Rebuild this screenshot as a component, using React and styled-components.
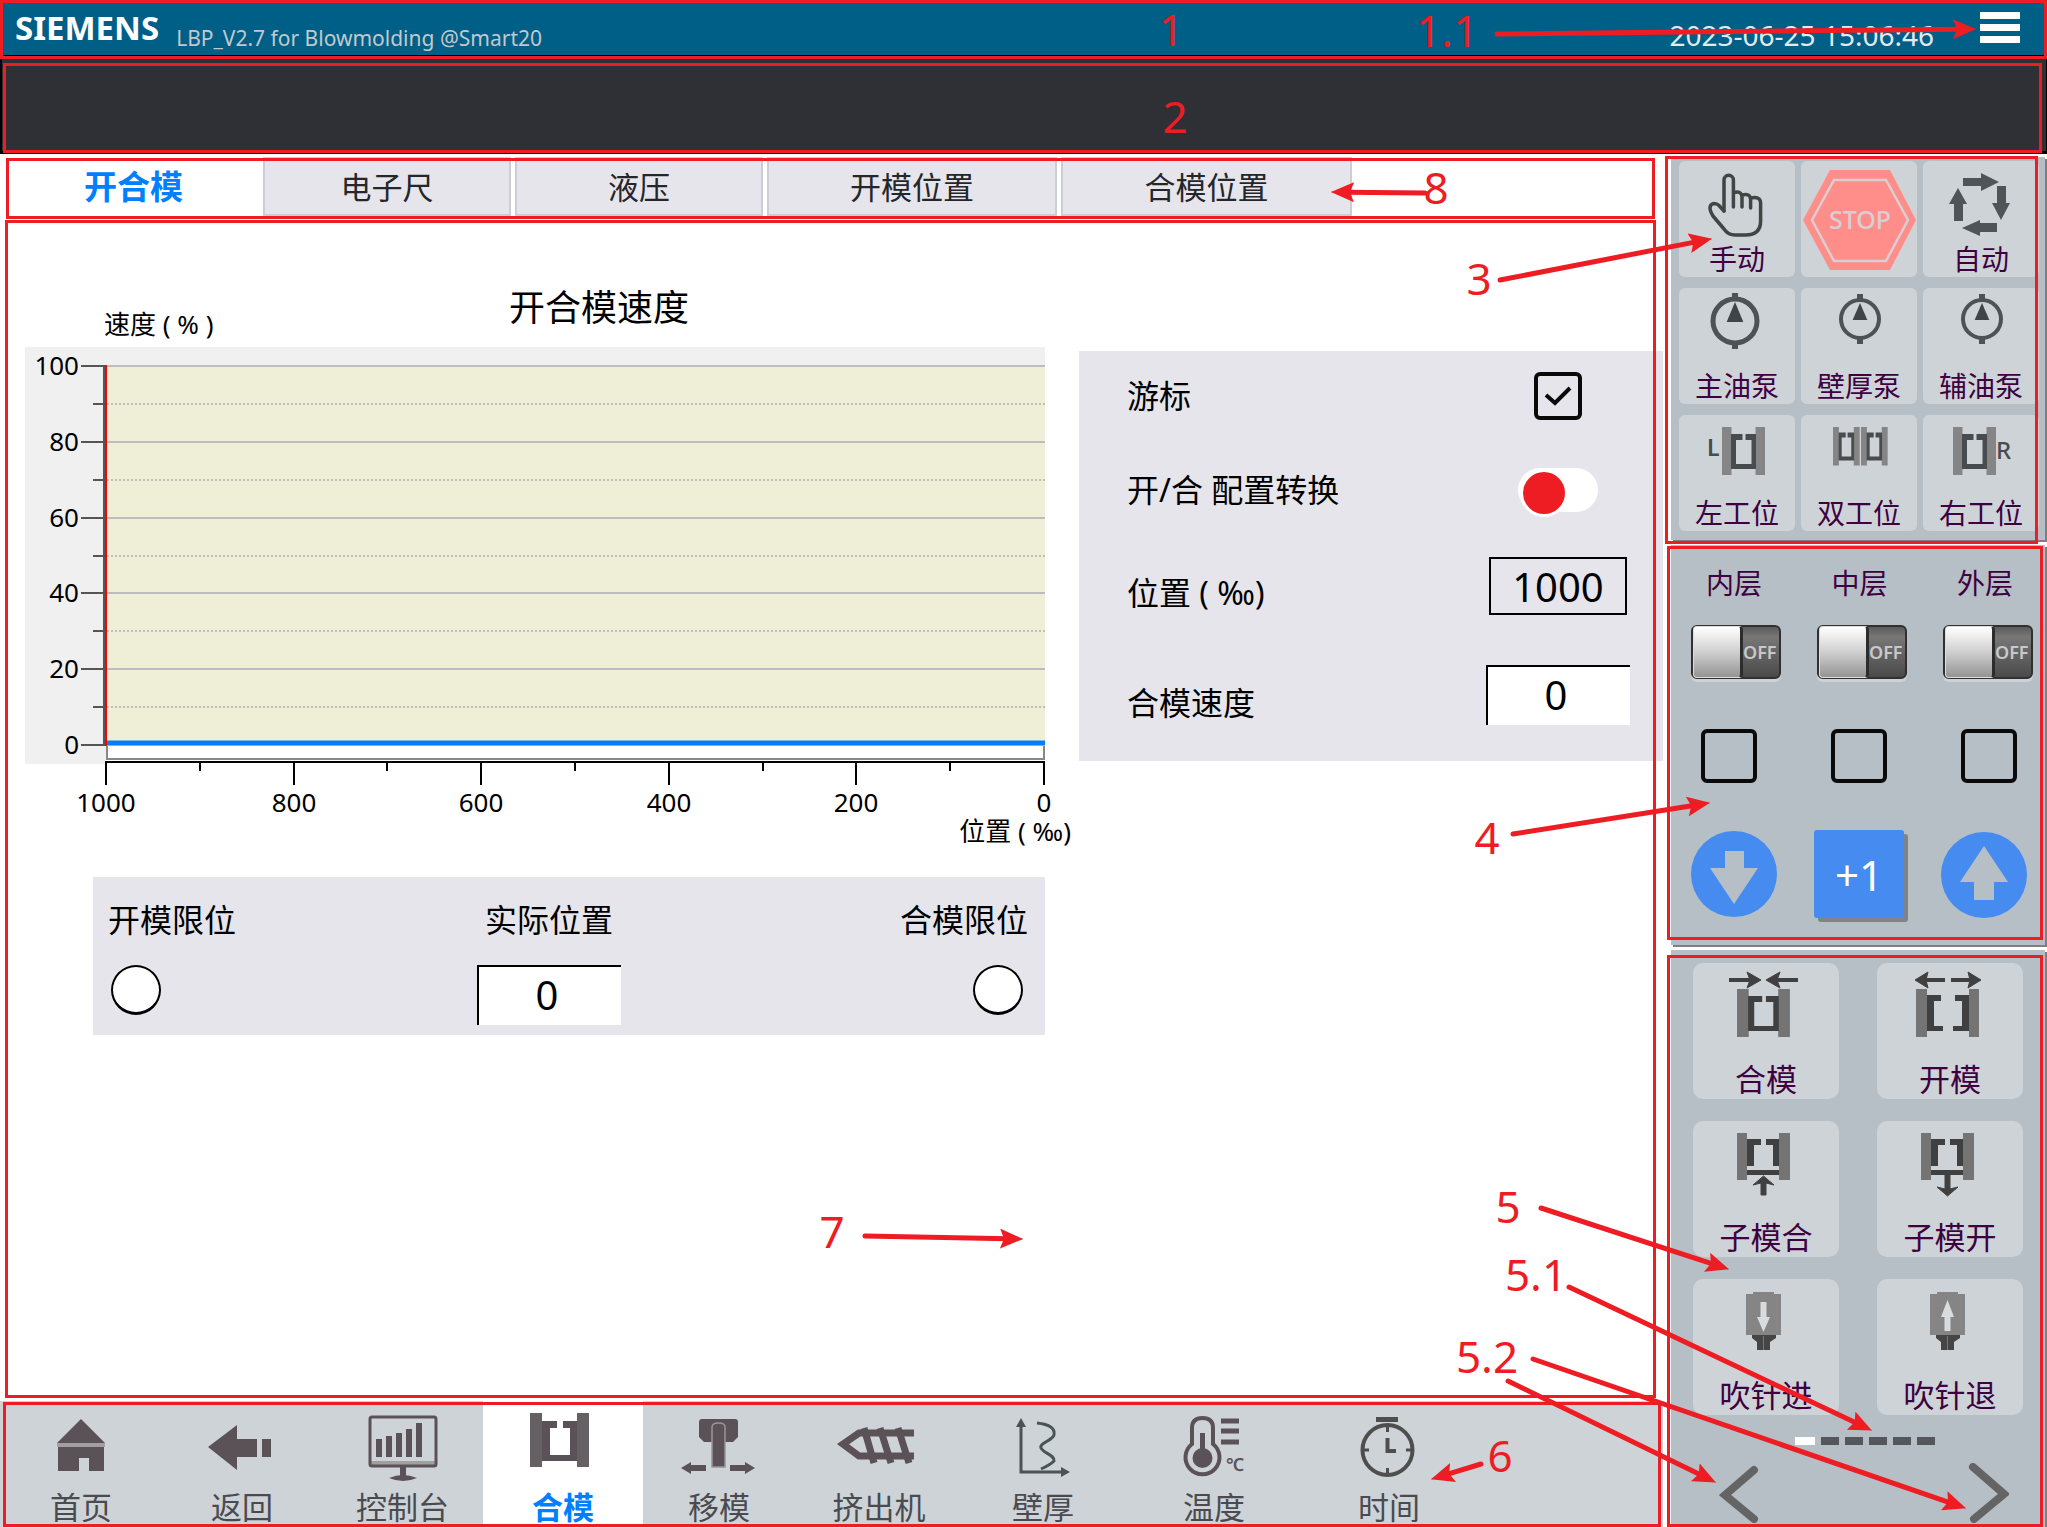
import React, { useState } from "react";
import styled, { createGlobalStyle, css } from "styled-components";

const GlobalStyle = createGlobalStyle`
  * { box-sizing: border-box; }
  body { margin: 0; background: #fff; font-family: "Noto Sans", "Noto Sans CJK SC", sans-serif; }
  button, input { font-family: inherit; margin: 0; }
`;

const RED = "#ee1c23";
const INK = "#3e0040";

/* ---------- shell ---------- */
const Shell = styled.div`
  position: relative;
  min-height: 100vh;
  display: flex;
  flex-direction: column;
  background: #fff;
`;

const Frame = styled.span`
  position: absolute;
  inset: ${(p) => p.$inset || "0"};
  border: 3px solid ${RED};
  pointer-events: none;
  z-index: 2;
`;

const Header = styled.header`
  position: relative;
  display: flex;
  align-items: center;
  height: 56px;
  padding: 0 27px 0 15px;
  background: #005f87;
  border-bottom: 1px solid #000;
`;

const Brand = styled.strong`
  font-size: 33px;
  line-height: 56px;
  color: #fff;
`;

const Version = styled.span`
  align-self: flex-end;
  margin-left: 17px;
  font-size: 21px;
  line-height: 34px;
  color: #c3c8cc;
`;

const Clock = styled.time`
  align-self: flex-end;
  margin-left: auto;
  font-size: 28px;
  line-height: 40px;
  color: #e4e9ec;
`;

const MenuButton = styled.button`
  display: grid;
  gap: 5px;
  width: 40px;
  margin-left: 46px;
  padding: 0;
  border: 0;
  background: none;
  span { height: 7px; background: #fff; }
`;

const Banner = styled.section`
  position: relative;
  height: 98px;
  background: #2f3035;
  border: solid #000;
  border-width: 1px 1px 3px 2px;
`;

const Body = styled.div`
  flex: 1;
  display: grid;
  grid-template-columns: minmax(0, 1fr) 374px;
  gap: 8px;
  padding: 3px 2px 0 0;
`;

const Main = styled.main`
  display: flex;
  flex-direction: column;
`;

/* ---------- tabs ---------- */
const Tabs = styled.div`
  position: relative;
  display: flex;
  gap: 4px;
  height: 59px;
  padding-left: 8px;
`;

const Tab = styled.button`
  flex: 0 1 ${(p) => p.$w}px;
  border: 2px solid #cbcfd5;
  background: #e6e5eb;
  color: #25262a;
  font-size: 31px;
  line-height: 52px;
  padding: 0;
  ${(p) =>
    p.$active &&
    css`
      border-color: #fff;
      background: #fff;
      color: #0080ff;
      font-size: 33px;
      font-weight: 700;
    `}
`;

/* ---------- content ---------- */
const Content = styled.section`
  position: relative;
  flex: 1;
  padding: 68px 0 0 25px;
  display: grid;
  grid-template-columns: minmax(0, 1054fr) minmax(0, 584fr);
  align-items: start;
`;

const ChartHead = styled.div`
  display: grid;
  grid-template-columns: 405px auto;
  height: 63px;
  padding-left: 79px;
`;

const AxisCaption = styled.span`
  align-self: end;
  font-size: 26px;
  line-height: 46px;
`;

const Title = styled.h2`
  margin: 0;
  font-size: 36px;
  font-weight: 400;
  line-height: 48px;
`;

const ChartSvg = styled.svg`
  display: block;
  width: 100%;
  height: auto;
`;

const StatusCard = styled.div`
  display: grid;
  grid-template-columns: 369fr 144px 407fr;
  margin: 27px 34px 0 68px;
  padding: 23px 17px 10px 15px;
  background: #e6e5eb;
`;

const StatusItem = styled.div`
  display: flex;
  flex-direction: column;
  align-items: ${(p) => p.$align};
  gap: 25px;
  font-size: 32px;
  line-height: 40px;
`;

const Lamp = styled.span`
  width: 50px;
  height: 50px;
  margin: 0 5px 0 3px;
  border: 2px solid #000;
  border-bottom-width: 3px;
  border-radius: 50%;
  background: #fff;
`;

const NumberBox = styled.input`
  width: 144px;
  height: 60px;
  padding: 0 6px 4px 0;
  border: solid #000;
  border-width: 2px 0 0 2px;
  border-radius: 0;
  background: #fff;
  color: #000;
  font-size: 40px;
  text-align: center;
  ${(p) =>
    p.$outlined &&
    css`
      width: 138px;
      height: 58px;
      padding: 0;
      border-width: 2px;
      background: #e6e5eb;
    `}
`;

const SettingsCard = styled.div`
  margin-top: 67px;
  padding: 0 33px 36px 48px;
  background: #e6e5eb;
`;

const Field = styled.div`
  display: grid;
  grid-template-columns: 1fr 144px;
  align-items: ${(p) => p.$align || "center"};
  justify-items: start;
  height: ${(p) => p.$h}px;
  font-size: 32px;
  line-height: 44px;
  > :last-child { justify-self: center; }
`;

const CheckWrap = styled.span`
  position: relative;
  display: block;
  width: ${(p) => p.$w}px;
  height: ${(p) => p.$h}px;
  svg { position: absolute; inset: 0; pointer-events: none; }
`;

const CheckInput = styled.input`
  appearance: none;
  display: block;
  width: 100%;
  height: 100%;
  border: 4px solid #0a0a0a;
  border-radius: 6px;
`;

const PillSwitch = styled.input`
  appearance: none;
  display: block;
  width: 80px;
  height: 44px;
  padding: 1px 2px;
  border-radius: 22px;
  background: #fff;
  &::before {
    content: "";
    display: block;
    width: 42px;
    height: 42px;
    border: 3px solid #fff;
    border-radius: 50%;
    background: ${RED};
    margin-left: 0;
  }
  &:checked::before { margin-left: 34px; }
`;

/* ---------- bottom navigation ---------- */
const Nav = styled.nav`
  position: relative;
  display: grid;
  grid-template-columns: 162fr 160fr 161fr 160fr 152fr 168fr 160fr 182fr 168fr 190fr;
  height: 126px;
  background: #ced3d7;
`;

const NavItem = styled.a`
  display: flex;
  flex-direction: column;
  align-items: center;
  color: ${(p) => (p.$active ? "#0080ff" : "#4a4b50")};
  background: ${(p) => (p.$active ? "#fff" : "none")};
  font-size: 31px;
  font-weight: ${(p) => (p.$active ? 700 : 400)};
  line-height: 34px;
  text-decoration: none;
  white-space: nowrap;
  svg { display: block; }
`;

/* ---------- sidebar ---------- */
const Sidebar = styled.aside`
  display: flex;
  flex-direction: column;
  gap: 5px;
`;

const Panel = styled.section`
  position: relative;
  background: #b6bec6;
  box-shadow: 2px 2px 0 #7d7f82;
`;

const ModePanel = styled(Panel)`
  display: grid;
  grid-template-columns: repeat(3, 1fr);
  gap: 11px 6px;
  padding: 4px 6px 9px 8px;
`;

const LayerPanel = styled(Panel)`
  padding: 22px 0 27px;
`;

const ActionPanel = styled(Panel)`
  flex: 1;
  padding-top: 13px;
`;

const ActionGrid = styled.div`
  display: grid;
  grid-template-columns: 1fr 1fr;
  gap: 22px 38px;
  padding: 0 22px;
`;

const Tile = styled.button`
  display: flex;
  flex-direction: column;
  align-items: center;
  height: ${(p) => (p.$large ? 136 : 116)}px;
  padding: 0;
  border: 0;
  border-radius: ${(p) => (p.$large ? 10 : 6)}px;
  background: #ced3d7;
  color: ${INK};
  font-size: ${(p) => (p.$large ? 31 : 28)}px;
  line-height: ${(p) => (p.$large ? 40 : 30)}px;
  white-space: nowrap;
  svg { display: block; flex: none; }
`;

const SpreadRow = styled.div`
  display: flex;
  justify-content: space-between;
  margin-top: ${(p) => p.$top || 0}px;
  padding: ${(p) => p.$pad};
  color: ${INK};
  font-size: 28px;
  line-height: 32px;
`;

const OffSwitch = styled.button`
  display: flex;
  align-items: center;
  justify-content: space-between;
  width: 90px;
  height: 54px;
  padding: 0 3px 0 0;
  border: 2px solid #303030;
  border-radius: 6px;
  background: linear-gradient(#5c5c5c, #777 20%, #4a4a4a);
  box-shadow: 0 3px 0 #cfd2d5;
  color: #c9c9c9;
  font-size: 18px;
  font-weight: 600;
  &::before {
    content: "";
    flex: none;
    width: 46px;
    height: 50px;
    border: 1px solid #ddd;
    border-right: 3px solid #2c2c2c;
    border-radius: 4px;
    background: linear-gradient(#fff, #cfcfcf 50%, #949494);
  }
`;

const RoundButton = styled.button`
  width: 86px;
  height: 88px;
  padding: 0;
  border: 0;
  background: none;
  svg { display: block; }
`;

const StepButton = styled.button`
  width: 90px;
  height: 88px;
  padding: 0;
  border: 0;
  border-radius: 3px;
  background: #458bf0;
  box-shadow: 4px 4px 0 #808488;
  color: #fff;
  font-size: 42px;
`;

const Pager = styled.div`
  display: flex;
  justify-content: center;
  gap: 6px;
  margin-top: 22px;
  padding-left: 14px;
`;

const Dash = styled.span`
  width: ${(p) => (p.$active ? 20 : 18)}px;
  height: 8px;
  background: ${(p) => (p.$active ? "#fff" : "#53575b")};
`;

const PageButton = styled.button`
  width: 42px;
  height: 60px;
  padding: 0;
  border: 0;
  background: none;
  svg { display: block; }
`;

const Overlay = styled.svg`
  position: absolute;
  inset: 0;
  width: 100%;
  height: 100%;
  pointer-events: none;
  z-index: 3;
  text {
    fill: ${RED};
    font-size: 44px;
    text-anchor: middle;
  }
`;

/* ---------- mode icons ---------- */
const Icon = ({ w = 116, h = 83, children }) => (
  <svg width={w} height={h} viewBox={`0 0 ${w} ${h}`} aria-hidden="true">
    {children}
  </svg>
);

const HandIcon = () => (
  <Icon>
    <g fill="none" stroke="#3f4643" strokeWidth="3.500" strokeLinecap="round" strokeLinejoin="round">
      <path d="M45 50V19a4.700 4.700 0 0 1 9.400 0V46M54.400 32q8-3 8.600 4v10M63 34q8-2 8.600 4v9" />
      <path d="M71.600 37q10-2 10 5v18q0 14-15 14H56q-7 0-11-6L34 55q-3-5-3-8q0-4 4-4.500q3 0 5 2l5 5.500" />
    </g>
  </Icon>
);

const StopIcon = () => (
  <Icon h={116}>
    <path d="M2 59L29 9H89L115 59L89 109H29Z" fill="#ff8e8b" />
    <path d="M11 59L33 19H85L107 59L85 100H33Z" fill="none" stroke="#d9cfd2" strokeWidth="2.500" />
    <text x="59" y="68" textAnchor="middle" fontSize="25" fontWeight="500" fill="#d9cfd2">STOP</text>
  </Icon>
);

const AutoIcon = () => (
  <Icon>
    <g fill="#4f5457">
      <path d="M40 17H58V12L76 21L58 30V25H40Z" />
      <path d="M74 25H83V42H87L78 59L69 42H74Z" />
      <path d="M74 62V71H57V75L39 67L57 59V62Z" />
      <path d="M31 60V43H26L35 27L44 43H40V60Z" />
    </g>
  </Icon>
);

const PumpIcon = ({ cx, cy, r, sw }) => (
  <Icon>
    <circle cx={cx} cy={cy} r={r} fill="none" stroke="#4d5254" strokeWidth={sw} />
    <path
      d={`M${cx} ${cy - r - 6}V${cy - r}M${cx} ${cy + r}V${cy + r + 6}`}
      stroke="#4d5254"
      strokeWidth="6"
    />
    <path d={`M${cx} ${cy - r + 3}L${cx + r / 3 + 1} ${cy + 1}H${cx - r / 3 - 1}Z`} fill="#3f4547" />
  </Icon>
);

const Mold = ({ x, y, sx = 1, sy = 1, side = "#858585", core = "#484c4e" }) => (
  <g transform={`translate(${x} ${y}) scale(${sx} ${sy})`}>
    <path d="M0 0H9.500V48H0ZM33.500 0H43V48H33.500Z" fill={side} />
    <path d="M9 7H20.500V13H14V37H29.500V13H23.500V7H34V42H9Z" fill={core} />
  </g>
);

const LeftStationIcon = () => (
  <Icon>
    <text x="28" y="41" fontSize="23" fontWeight="600" fill="#484c4e">L</text>
    <Mold x={43} y={12} />
  </Icon>
);
const DoubleStationIcon = () => (
  <Icon>
    <Mold x={32} y={12} sx={0.62} sy={0.8} />
    <Mold x={60} y={12} sx={0.62} sy={0.8} />
  </Icon>
);
const RightStationIcon = () => (
  <Icon>
    <Mold x={30} y={12} />
    <text x="73" y="44" fontSize="24" fontWeight="500" fill="#484c4e">R</text>
  </Icon>
);

/* ---------- action icons ---------- */
const Dark = "#404040";
const Side = "#747474";

const ActionIcon = ({ children }) => <Icon w={146} h={96}>{children}</Icon>;

const CloseMoldIcon = () => (
  <ActionIcon>
    <path d="M36 17H58M84 17H105" stroke={Dark} strokeWidth="4" />
    <path d="M54 9L68 17L54 25L57 17ZM87 9L73 17L87 25L84 17Z" fill={Dark} stroke={Dark} />
    <Mold x={44} y={26} sx={1.23} side={Side} core={Dark} />
  </ActionIcon>
);
const OpenMoldIcon = () => (
  <ActionIcon>
    <path d="M48 17H68M74 17H94" stroke={Dark} strokeWidth="4" />
    <path d="M51 9L38 17L51 25L49 17ZM91 9L104 17L91 25L93 17Z" fill={Dark} stroke={Dark} />
    <path d="M39 26H50V74H39ZM92 26H102V74H92Z" fill={Side} />
    <path d="M50 32H64V38H57V63H66V68H50ZM92 32H78V38H85V63H76V68H92Z" fill={Dark} />
  </ActionIcon>
);
const SubMoldIcon = ({ up }) => (
  <ActionIcon>
    <path d="M44 12H54V59H44ZM86 12H97V59H86Z" fill={Side} />
    <path d="M54 18H68V24H61V45H54ZM86 18H73V24H80V45H86ZM54 49H86V54H54Z" fill={Dark} />
    {up ? (
      <path d="M70.500 55L81 64L73 62V74H68V62L60 64Z" fill={Dark} stroke={Dark} />
    ) : (
      <path d="M70.500 75L81 66L73 68V54H68V68L60 66Z" fill={Dark} stroke={Dark} />
    )}
  </ActionIcon>
);
const NeedleIcon = ({ up }) => (
  <ActionIcon>
    <path d="M60 13H81V15H88V56H53V15H60Z" fill="#858585" />
    <path d="M59 56H83V59L77 63V71H64V63L59 59Z" fill="#454545" />
    <path d="M70.500 57V71" stroke="#777" strokeWidth="1" />
    {up ? (
      <path d="M70.500 21L77 38H73.500V52H67.500V38H64Z" fill="#d9dcde" />
    ) : (
      <path d="M70.500 53L77 38H73.500V23H67.500V38H64Z" fill="#d9dcde" />
    )}
  </ActionIcon>
);

/* ---------- navigation icons ---------- */
const N = "#5a5257";
const NavIcon = ({ children }) => <Icon w={120} h={89}>{children}</Icon>;

const HomeIcon = () => (
  <NavIcon>
    <path d="M60 18L84 42H36Z" fill={N} />
    <path d="M36 42H84V46H36Z" fill="#a29fa2" />
    <path d="M37 46H83V70H68V57H58V70H37Z" fill={N} />
  </NavIcon>
);
const BackIcon = () => (
  <NavIcon>
    <path d="M26 46L55 24V38H75V56H55V69ZM80 38H89V56H80Z" fill={N} />
  </NavIcon>
);
const ConsoleIcon = () => (
  <NavIcon>
    <path d="M27 60H93V65H27Z" fill="#a29fa2" />
    <rect x="27" y="16" width="66" height="49" rx="2" fill="none" stroke={N} strokeWidth="3" />
    <path d="M36 56V38M46 56V35M56 56V32M66 56V28M76 56V22" stroke={N} strokeWidth="6" />
    <path d="M60 65V77" stroke={N} strokeWidth="6" />
    <path d="M46 77Q60 71 74 77Q60 83 46 77Z" fill={N} />
  </NavIcon>
);
const NavMoldIcon = () => (
  <NavIcon>
    <path d="M27 12H39V66H27ZM74 12H86V66H74Z" fill="#665f63" />
    <path d="M39 20H54V27H47V54H67V27H60V20H74V60H39Z" fill={N} />
  </NavIcon>
);
const MoveMoldIcon = () => (
  <NavIcon>
    <path d="M43 18H76Q79 18 79 21V36L74 41H45L40 36V21Q40 18 43 18Z" fill={N} />
    <path d="M53 66V26Q53 22 59.500 22Q66 22 66 26V66Z" fill={N} stroke="#9a9599" strokeWidth="1.500" />
    <path d="M22 67L32 61V64H47V70H32V73ZM96 67L86 61V64H71V70H86V73Z" fill={N} />
  </NavIcon>
);
const ExtruderIcon = () => (
  <NavIcon>
    <g fill="none" stroke={N}>
      <path d="M95 32H40L24 43L40 55H95" strokeWidth="7" />
      <path d="M45 27L55 62M61 27L72 62M79 27L90 62" strokeWidth="7" />
    </g>
  </NavIcon>
);
const ThicknessIcon = () => (
  <NavIcon>
    <g fill="none" stroke="#4a5356" strokeWidth="3">
      <path d="M38 22V71H84" />
      <path d="M54 22Q73 24 71 34C69 40 56 42 58 47C60 52 72 54 71 60Q67 64 58 68" />
    </g>
    <path d="M38 17L43 26H33ZM87 71L78 66V76Z" fill="#4a5356" />
  </NavIcon>
);
const TemperatureIcon = () => (
  <NavIcon>
    <path
      d="M38 43V27Q38 17 48.500 17Q59 17 59 27V43A17 17 0 1 1 38 43Z"
      fill="none"
      stroke={N}
      strokeWidth="4"
    />
    <circle cx="48.500" cy="57" r="10" fill={N} />
    <path d="M48.500 32V57" stroke={N} strokeWidth="5" />
    <path d="M67 20H85M67 30H85M67 41H85" stroke={N} strokeWidth="5" />
    <text x="72" y="70" fontSize="18" fontWeight="600" fill={N}>℃</text>
  </NavIcon>
);
const TimerIcon = () => (
  <NavIcon>
    <path d="M47 16H69V21H47Z" fill="#4e4f4c" />
    <g fill="none" stroke="#4e4f4c">
      <circle cx="58.500" cy="49" r="25" strokeWidth="4" />
      <path d="M58.500 37V50H67" strokeWidth="4" />
      <path d="M58.500 24V31M58.500 67V74M34 49H40M77 49H83" strokeWidth="3" />
    </g>
  </NavIcon>
);

/* ---------- chart ---------- */
const yTicks = Array.from({ length: 11 }, (_, i) => ({ value: 100 - i * 10, y: Math.round(19 + i * 37.9) }));
const xTicks = Array.from({ length: 11 }, (_, i) => ({ value: 1000 - i * 100, x: Math.round(81 + i * 93.8) }));

const SpeedChart = () => (
  <ChartSvg viewBox="0 0 1054 503" role="img" aria-label="开合模速度">
    <rect x="0" y="0" width="1020" height="417" fill="#f0f0f0" />
    <rect x="81" y="19" width="939" height="380" fill="#efefd7" />
    <rect x="81" y="399" width="973" height="104" fill="#fff" />
    {yTicks.map(({ value, y }, i) => (
      <g key={value}>
        {value > 0 && (
          <line
            x1="82" x2="1020" y1={y} y2={y}
            stroke="#bdbdbd" strokeWidth="2" strokeDasharray={i % 2 ? "2 2" : undefined}
          />
        )}
        <line x1={i % 2 ? 68 : 56} x2="80" y1={y} y2={y} stroke="#555" strokeWidth="2" />
        {i % 2 === 0 && (
          <text x="54" y={y + 9} fontSize="26" textAnchor="end">{value}</text>
        )}
      </g>
    ))}
    <path d="M82 399V412H1019V399" fill="none" stroke="#888" strokeWidth="2" />
    <line x1="79" x2="79" y1="18" y2="399" stroke="#555" strokeWidth="2" />
    <line x1="81" x2="81" y1="18" y2="399" stroke="#f00" strokeWidth="2" />
    <line x1="82" x2="1020" y1="396" y2="396" stroke="#0080ff" strokeWidth="5" />
    <line x1="80" x2="1020" y1="415" y2="415" stroke="#000" strokeWidth="2" />
    {xTicks.map(({ value, x }, i) => (
      <g key={value}>
        <line x1={x} x2={x} y1="415" y2={i % 2 ? 424 : 438} stroke="#000" strokeWidth="2" />
        {i % 2 === 0 && (
          <text x={x} y="465" fontSize="26" textAnchor="middle">{value}</text>
        )}
      </g>
    ))}
    <text x="1046" y="494" fontSize="26" textAnchor="end">位置 ( ‰)</text>
  </ChartSvg>
);

/* ---------- callouts ---------- */
const arrows = [
  [1497, 34, 1975, 29],
  [1425, 193, 1332, 192],
  [1500, 280, 1711, 239],
  [1513, 834, 1709, 803],
  [865, 1236, 1022, 1239],
  [1541, 1208, 1728, 1269],
  [1569, 1287, 1871, 1430],
  [1508, 1381, 1715, 1482],
  [1533, 1359, 1965, 1508],
  [1481, 1464, 1432, 1479],
];

const callouts = [
  ["1", 1171, 46], ["1.1", 1447, 47], ["2", 1175, 133], ["8", 1436, 204],
  ["3", 1479, 295], ["4", 1487, 854], ["7", 832, 1248], ["5", 1508, 1223],
  ["5.1", 1536, 1291], ["5.2", 1487, 1373], ["6", 1500, 1472],
];

const Callouts = () => (
  <Overlay viewBox="0 0 2047 1527" preserveAspectRatio="none">
    <defs>
      <marker id="head" markerUnits="userSpaceOnUse" markerWidth="24" markerHeight="20" refX="22" refY="10" orient="auto">
        <path d="M0 0L23 10L0 20L4 10Z" fill={RED} />
      </marker>
    </defs>
    {arrows.map(([x1, y1, x2, y2]) => {
      const len = Math.hypot(x2 - x1, y2 - y1);
      const ex = x2 - ((x2 - x1) / len) * 14;
      const ey = y2 - ((y2 - y1) / len) * 14;
      return (
        <g key={`${x1}-${y1}`} stroke={RED} strokeLinecap="round">
          <line x1={x1} y1={y1} x2={ex} y2={ey} strokeWidth="5" />
          <line x1={x1} y1={y1} x2={x2} y2={y2} strokeWidth="1" markerEnd="url(#head)" />
        </g>
      );
    })}
    {callouts.map(([label, x, y]) => (
      <text key={label} x={x} y={y}>{label}</text>
    ))}
  </Overlay>
);

/* ---------- data ---------- */
const tabs = [
  ["开合模", 251], ["电子尺", 248], ["液压", 248], ["开模位置", 290], ["合模位置", 291],
];

const modes = [
  ["手动", <HandIcon />],
  ["", <StopIcon />],
  ["自动", <AutoIcon />],
  ["主油泵", <PumpIcon cx={56} cy={33} r={22} sw={5} />],
  ["壁厚泵", <PumpIcon cx={59} cy={31} r={19} sw={4} />],
  ["辅油泵", <PumpIcon cx={59} cy={31} r={19} sw={4} />],
  ["左工位", <LeftStationIcon />],
  ["双工位", <DoubleStationIcon />],
  ["右工位", <RightStationIcon />],
];

const actions = [
  ["合模", <CloseMoldIcon />],
  ["开模", <OpenMoldIcon />],
  ["子模合", <SubMoldIcon up />],
  ["子模开", <SubMoldIcon />],
  ["吹针进", <NeedleIcon />],
  ["吹针退", <NeedleIcon up />],
];

const navItems = [
  ["首页", <HomeIcon />],
  ["返回", <BackIcon />],
  ["控制台", <ConsoleIcon />],
  ["合模", <NavMoldIcon />],
  ["移模", <MoveMoldIcon />],
  ["挤出机", <ExtruderIcon />],
  ["壁厚", <ThicknessIcon />],
  ["温度", <TemperatureIcon />],
  ["时间", <TimerIcon />],
];

const layers = ["内层", "中层", "外层"];

export default function App() {
  const [tab, setTab] = useState(0);
  const [cursor, setCursor] = useState(true);

  return (
    <>
      <GlobalStyle />
      <Shell>
        <Header>
          <Brand>SIEMENS</Brand>
          <Version>LBP_V2.7 for Blowmolding @Smart20</Version>
          <Clock>2023-06-25 15:06:46</Clock>
          <MenuButton aria-label="菜单">
            <span />
            <span />
            <span />
          </MenuButton>
          <Frame $inset="0 0 -4px 0" />
        </Header>
        <Banner>
          <Frame $inset="6px 4px -2px 1px" />
        </Banner>
        <Body>
          <Main>
            <Tabs role="tablist">
              {tabs.map(([name, w], i) => (
                <Tab key={name} role="tab" aria-selected={i === tab} $w={w} $active={i === tab} onClick={() => setTab(i)}>
                  {name}
                </Tab>
              ))}
              <Frame $inset="1px 8px -3px 6px" />
            </Tabs>
            <Content>
              <div>
                <ChartHead>
                  <AxisCaption>速度 ( % )</AxisCaption>
                  <Title>开合模速度</Title>
                </ChartHead>
                <SpeedChart />
                <StatusCard>
                  <StatusItem $align="flex-start">
                    <span>开模限位</span>
                    <Lamp />
                  </StatusItem>
                  <StatusItem $align="center">
                    <label htmlFor="actual">实际位置</label>
                    <NumberBox id="actual" defaultValue="0" />
                  </StatusItem>
                  <StatusItem $align="flex-end">
                    <span>合模限位</span>
                    <Lamp />
                  </StatusItem>
                </StatusCard>
              </div>
              <SettingsCard>
                <Field $h={90}>
                  <label htmlFor="cursor">游标</label>
                  <CheckWrap $w={48} $h={48}>
                    <CheckInput id="cursor" type="checkbox" checked={cursor} onChange={() => setCursor(!cursor)} />
                    {cursor && (
                      <svg width="48" height="48" viewBox="0 0 48 48">
                        <path d="M12 23L21 31L36 16" fill="none" stroke="#0a0a0a" strokeWidth="4" />
                      </svg>
                    )}
                  </CheckWrap>
                </Field>
                <Field $h={98}>
                  <label htmlFor="convert">开/合 配置转换</label>
                  <PillSwitch id="convert" type="checkbox" role="switch" />
                </Field>
                <Field $h={76} $align="end">
                  <label htmlFor="position">位置 ( ‰)</label>
                  <NumberBox id="position" $outlined defaultValue="1000" />
                </Field>
                <Field $h={110} $align="end">
                  <label htmlFor="speed">合模速度</label>
                  <NumberBox id="speed" defaultValue="0" />
                </Field>
              </SettingsCard>
              <Frame $inset="4px 7px 3px 5px" />
            </Content>
            <Nav>
              {navItems.map(([name, icon], i) => (
                <NavItem key={name} href="#" $active={i === 3}>
                  {icon}
                  {name}
                </NavItem>
              ))}
              <Frame $inset="1px 2px 0 3px" />
            </Nav>
          </Main>
          <Sidebar>
            <ModePanel>
              {modes.map(([name, icon]) => (
                <Tile key={name || "stop"}>
                  {icon}
                  {name}
                </Tile>
              ))}
              <Frame $inset="-1px 7px -4px -6px" />
            </ModePanel>
            <LayerPanel>
              <SpreadRow $pad="0 32px 0 35px">
                {layers.map((name) => (
                  <span key={name}>{name}</span>
                ))}
              </SpreadRow>
              <SpreadRow $top={26} $pad="0 12px 0 20px">
                {layers.map((name) => (
                  <OffSwitch key={name} role="switch" aria-checked="false" aria-label={name}>OFF</OffSwitch>
                ))}
              </SpreadRow>
              <SpreadRow $top={50} $pad="0 28px 0 30px">
                {layers.map((name) => (
                  <CheckWrap key={name} $w={56} $h={54}>
                    <CheckInput type="checkbox" aria-label={name} />
                  </CheckWrap>
                ))}
              </SpreadRow>
              <SpreadRow $top={47} $pad="0 18px 0 20px">
                <RoundButton aria-label="下">
                  <svg width="86" height="88" viewBox="0 0 86 88">
                    <circle cx="43" cy="44" r="43" fill="#458bf0" />
                    <path d="M34 21H53V38H67L43 74L19 38H34Z" fill="#b6bec6" />
                  </svg>
                </RoundButton>
                <StepButton>+1</StepButton>
                <RoundButton aria-label="上">
                  <svg width="86" height="88" viewBox="0 0 86 88">
                    <circle cx="43" cy="45" r="43" fill="#458bf0" />
                    <path d="M43 16L67 52H53V70H33V52H19Z" fill="#b6bec6" />
                  </svg>
                </RoundButton>
              </SpreadRow>
              <Frame $inset="1px 2px 5px -4px" />
            </LayerPanel>
            <ActionPanel>
              <ActionGrid>
                {actions.map(([name, icon]) => (
                  <Tile key={name} $large>
                    {icon}
                    {name}
                  </Tile>
                ))}
              </ActionGrid>
              <Pager>
                {[0, 1, 2, 3, 4, 5].map((n) => (
                  <Dash key={n} $active={n === 0} />
                ))}
              </Pager>
              <SpreadRow $top={18} $pad="0 36px 0 48px">
                <PageButton aria-label="上一页">
                  <svg width="42" height="60" viewBox="0 0 42 60">
                    <path d="M35 7L6 32L35 56" fill="none" stroke="#646464" strokeWidth="8" strokeLinecap="round" />
                  </svg>
                </PageButton>
                <PageButton aria-label="下一页">
                  <svg width="42" height="60" viewBox="0 0 42 60">
                    <path d="M6 4L37 31L7 56" fill="none" stroke="#646464" strokeWidth="8" strokeLinecap="round" />
                  </svg>
                </PageButton>
              </SpreadRow>
              <Frame $inset="5px 2px 0 -4px" />
            </ActionPanel>
          </Sidebar>
        </Body>
        <Callouts />
      </Shell>
    </>
  );
}
